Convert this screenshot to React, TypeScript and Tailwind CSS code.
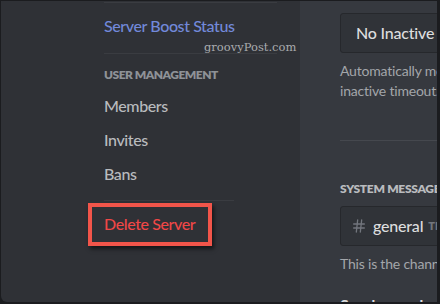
import { Hash } from 'lucide-react';

const font = { fontFamily: 'Lato, "Noto Sans", Arial, sans-serif' };

function NavItem({ label, className }: { label: string; className?: string }) {
    return (
        <div className={`h-[34px] flex items-center text-[16px] font-medium tracking-[-0.4px] ${className ?? 'text-[#b9bbbe]'}`}>
            {label}
        </div>
    );
}

export default function App() {
    return (
        <div
            className="w-[440px] h-[304px] bg-[#1b1c1f] pt-px pl-px pr-[3px] pb-[2px] overflow-hidden"
            style={font}
        >
            <div className="flex h-full rounded-bl-[6px] overflow-hidden">
                {/* Sidebar */}
                <aside className="w-[299px] shrink-0 bg-[#2f3136] pl-[103px] pr-[23px] relative">
                    <div className="mt-px h-px bg-[#3a3c41]" />
                    <div className="mt-[6px]">
                        <NavItem label="Server Boost Status" className="text-[#7289da]" />
                    </div>
                    {/* watermark */}
                    <span
                        className="absolute left-[203px] top-[38px] text-[11.5px] text-[#a9abae] whitespace-nowrap"
                        style={{ fontFamily: '"DejaVu Serif", "Liberation Serif", serif' }}
                    >
                        groovyPost.com
                    </span>
                    <div className="mt-[10px] h-px bg-[#3a3c41]" />
                    <div className="mt-[13px] h-4 flex items-center text-[12px] font-extrabold uppercase tracking-[-0.5px] text-[#8e9297]">
                        User Management
                    </div>
                    <div className="mt-[6px]">
                        <NavItem label="Members" />
                        <NavItem label="Invites" />
                        <NavItem label="Bans" />
                    </div>
                    <div className="mt-[9px] h-px w-[130px] bg-[#3a3c41]" />
                    <div className="mt-[6px] relative">
                        <NavItem label="Delete Server" className="text-[#f04747]" />
                        {/* highlight annotation */}
                        <div className="absolute left-[-16px] top-[-4px] w-[124px] h-[43px] border-[4px] border-[#f2554a] shadow-[2px_3px_4px_rgba(0,0,0,0.55)]" />
                    </div>
                </aside>

                {/* Main settings */}
                <main className="flex-1 bg-[#36393f] pl-[40px] pt-[12px] overflow-hidden">
                    <div className="w-[640px]">
                        <div className="h-[40px] w-[420px] rounded-[3px] border border-[#26282c] bg-[#303338] flex items-center pl-[15px] text-[16px] font-medium tracking-[-0.2px] text-[#dcddde] whitespace-nowrap">
                            No Inactive Channel
                        </div>
                        <p className="mt-[8px] text-[14px] leading-[20px] tracking-[-0.2px] text-[#a3a6aa] whitespace-nowrap">
                            Automatically move members to this channel and mute them when they have been idle for longer than the
                            <br />
                            inactive timeout.
                        </p>
                        <div className="mt-[39px] h-px bg-[#45484e]" />
                        <div className="mt-[40px] h-4 flex items-center text-[12px] font-extrabold uppercase tracking-[-0.3px] text-[#b9bbbe] whitespace-nowrap">
                            System Messages Channel
                        </div>
                        <div className="mt-[9px] h-[40px] w-[420px] rounded-[3px] border border-[#26282c] bg-[#303338] flex items-center pl-[10px] whitespace-nowrap">
                            <Hash className="w-[16px] h-[16px] text-[#72767d]" strokeWidth={2} />
                            <span className="ml-[6px] text-[16px] font-medium tracking-[-0.2px] text-[#dcddde]">general</span>
                            <span className="ml-[5px] text-[11px] font-extrabold uppercase text-[#72767d]">Text Channels</span>
                        </div>
                        <p className="mt-[8px] text-[14px] leading-[20px] tracking-[-0.2px] text-[#a3a6aa] whitespace-nowrap">
                            This is the channel we send system event messages to. These can be turned off at any time.
                        </p>
                        <div className="mt-[19px] text-[16px] font-bold text-[#dcddde] whitespace-nowrap">
                            Send a random welcome message when someone joins this server.
                        </div>
                    </div>
                </main>
            </div>
        </div>
    );
}
